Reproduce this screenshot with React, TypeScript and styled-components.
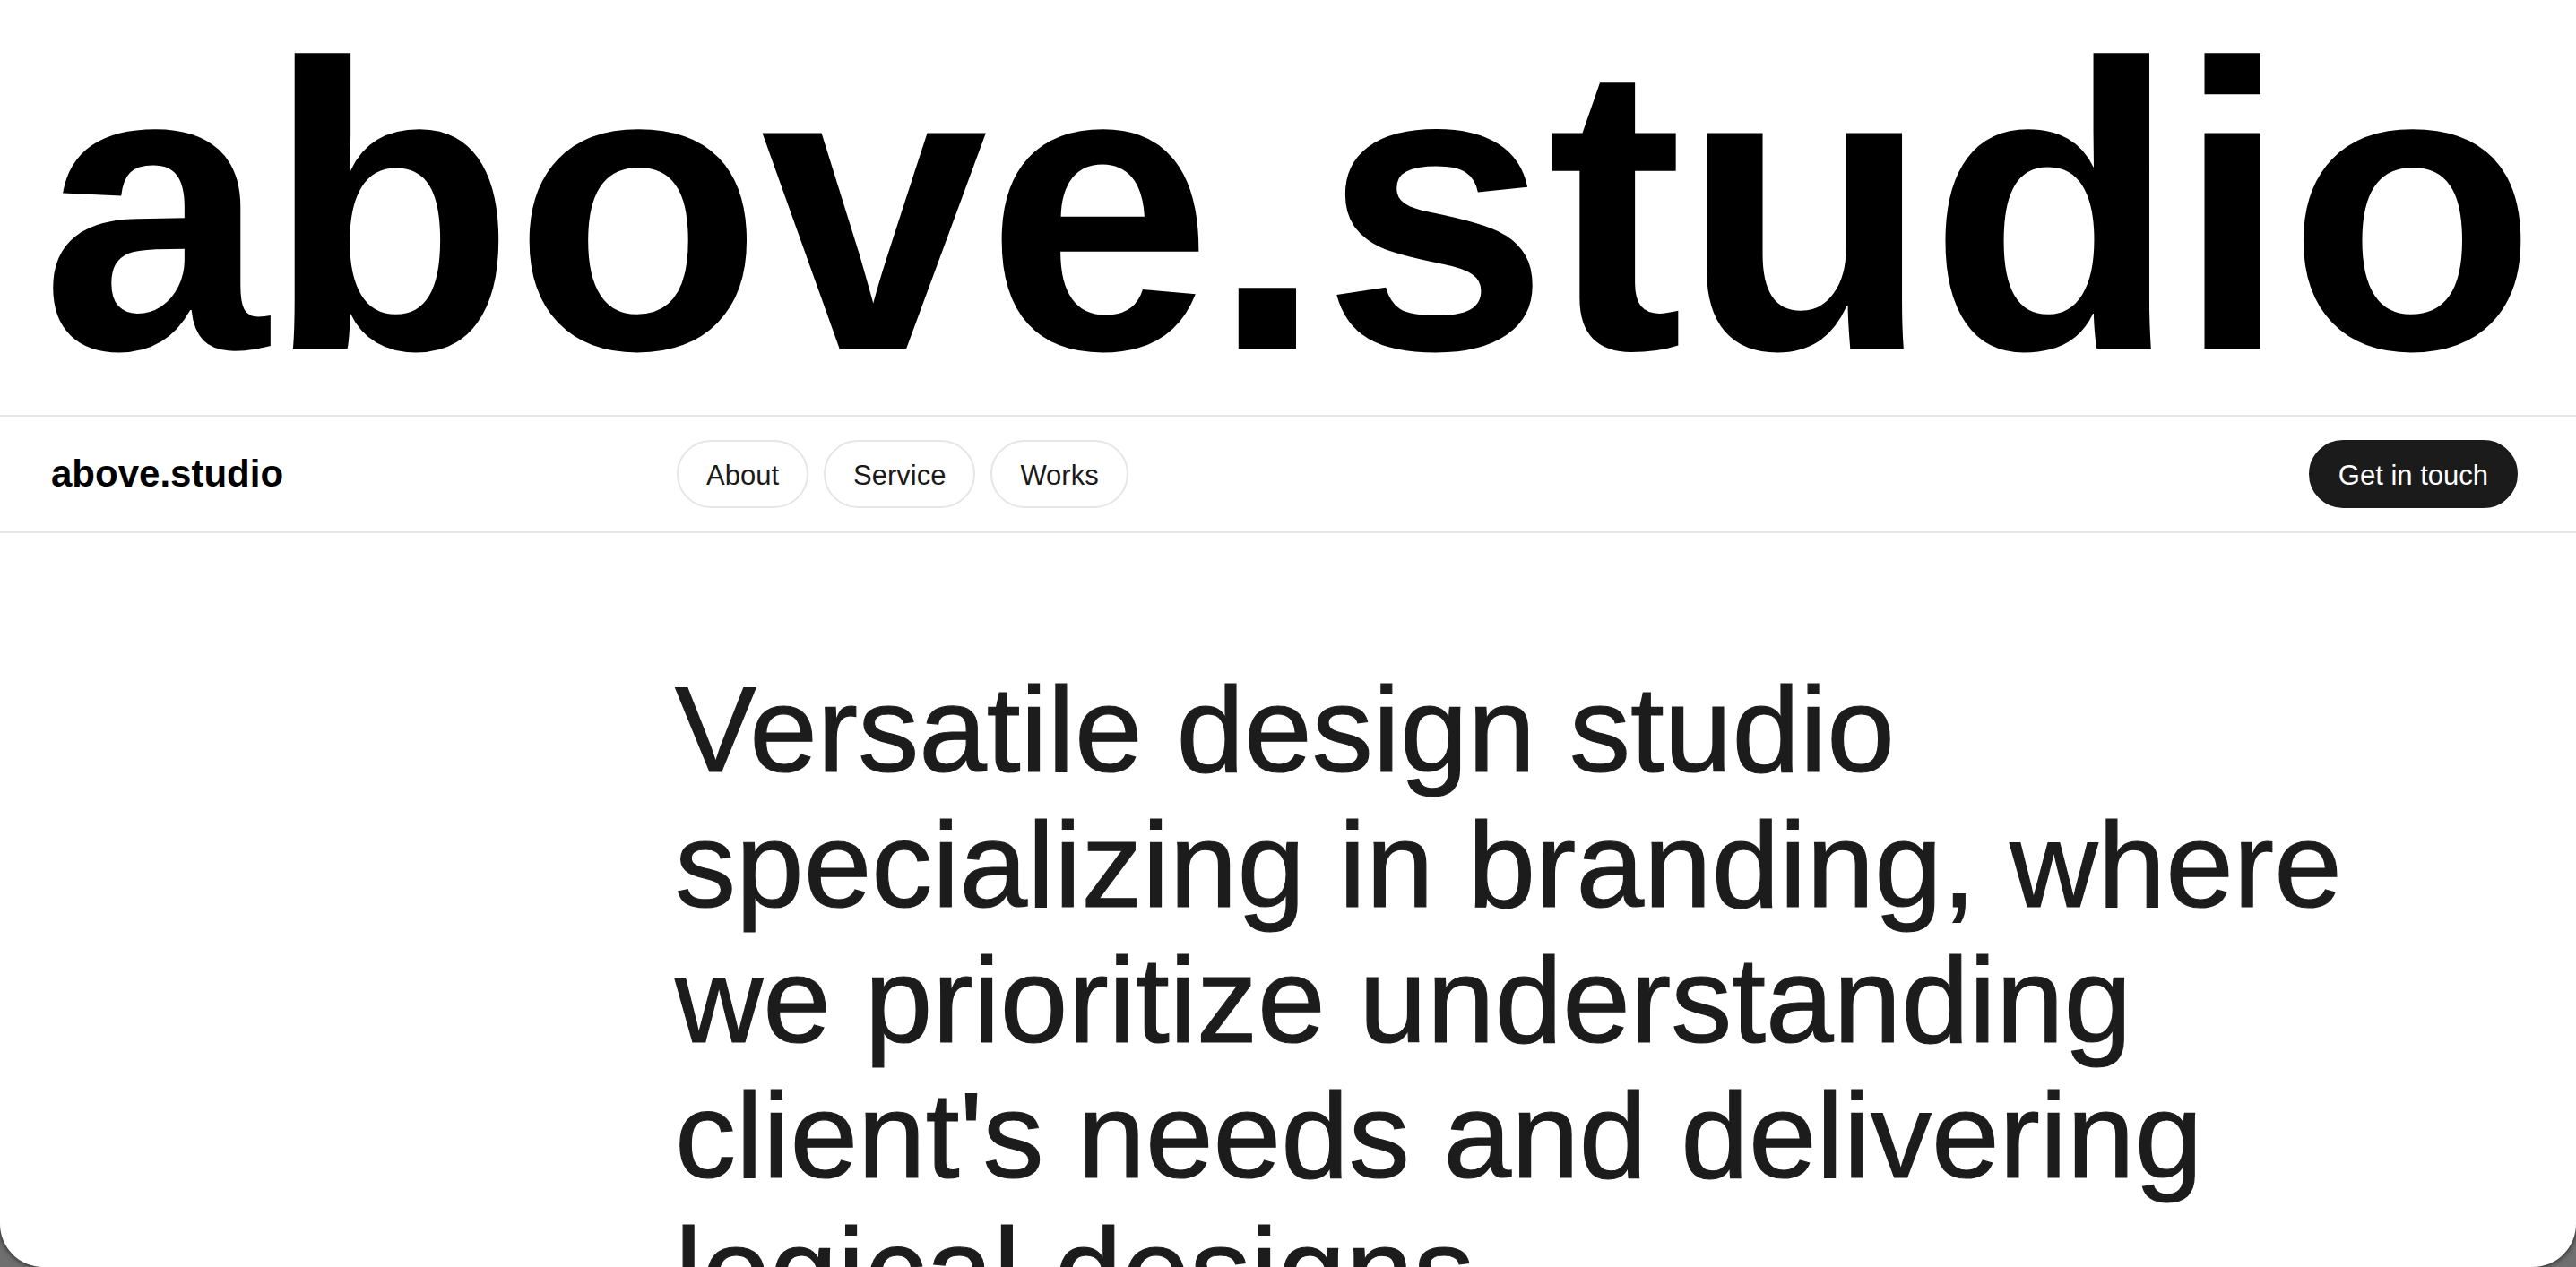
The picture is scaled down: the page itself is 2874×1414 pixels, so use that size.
import React from "react";
import styled, { createGlobalStyle } from "styled-components";

const GlobalStyle = createGlobalStyle`
  html, body {
    margin: 0;
    padding: 0;
    height: 100%;
    background: #6f6f6f;
  }
  body {
    font-family: "Liberation Sans", Arial, Helvetica, sans-serif;
    -webkit-font-smoothing: antialiased;
  }
  * { box-sizing: border-box; }
`;

const Card = styled.div`
  height: 100vh;
  background: #ffffff;
  border-radius: 0 0 48px 48px;
  overflow: hidden;
  box-shadow: 0 0 6px rgba(0, 0, 0, 0.85);
`;

const Hero = styled.h1`
  margin: 0;
  height: 463px;
  padding: 4px 0 0 0;
  font-family: "Liberation Sans", Arial, Helvetica, sans-serif;
  font-weight: 700;
  font-size: 455px;
  line-height: 1;
  letter-spacing: -2px;
  color: #000;
  text-align: center;
  white-space: nowrap;
`;

const Nav = styled.nav`
  display: grid;
  grid-template-columns: 698px 1fr auto;
  align-items: center;
  height: 132px;
  padding: 0 65px 0 57px;
  border-top: 2px solid #e6e6e6;
  border-bottom: 2px solid #e6e6e6;
`;

const Logo = styled.a`
  font-weight: 700;
  font-size: 42px;
  color: #000;
  text-decoration: none;
`;

const Links = styled.div`
  display: flex;
  gap: 17px;
`;

const Pill = styled.a<{ $dark?: boolean }>`
  display: inline-flex;
  align-items: center;
  justify-content: center;
  height: 76px;
  padding: 4px 31px 0;
  border-radius: 999px;
  border: 2px solid ${(p) => (p.$dark ? "#1b1b1b" : "#e6e6e6")};
  background: ${(p) => (p.$dark ? "#1b1b1b" : "#fff")};
  color: ${(p) => (p.$dark ? "#fff" : "#1a1a1a")};
  font-size: 31px;
  font-weight: 400;
  text-decoration: none;
`;

const Main = styled.main`
  display: grid;
  grid-template-columns: 696px 1fr;
  padding: 144px 65px 0 57px;
`;

const Statement = styled.p`
  grid-column: 2;
  margin: 0;
  max-width: 1950px;
  font-size: 136px;
  line-height: 151px;
  font-weight: 400;
  color: #1c1c1c;
  -webkit-text-stroke: 1.2px #1c1c1c;
`;

export default function App() {
  return (
    <>
      <GlobalStyle />
      <Card>
        <Hero>above.studio</Hero>
        <Nav>
          <Logo href="#">above.studio</Logo>
          <Links>
            <Pill href="#">About</Pill>
            <Pill href="#">Service</Pill>
            <Pill href="#">Works</Pill>
          </Links>
          <Pill href="#" $dark>
            Get in touch
          </Pill>
        </Nav>
        <Main>
          <Statement>
            Versatile design studio specializing in branding, where we
            prioritize understanding client's needs and delivering logical
            designs.
          </Statement>
        </Main>
      </Card>
    </>
  );
}
